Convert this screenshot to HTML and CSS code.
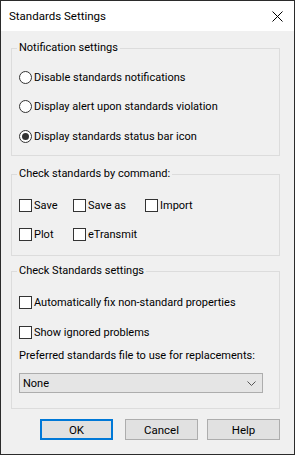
FILE: index.html
```html
<!DOCTYPE html>
<html lang="en">
<head>
    <meta charset="UTF-8">
    <meta name="viewport" content="width=device-width, initial-scale=1.0">
    <title>Standards Settings</title>
    <link rel="stylesheet" href="styles.css">
</head>
<body>
    <div class="window">
        <div class="titlebar">
            <span class="title">Standards Settings</span>
            <span class="close">
                <svg width="11" height="11" viewBox="0 0 11 11"><path d="M0.5 0.5 L10.5 10.5 M10.5 0.5 L0.5 10.5" stroke="#000" stroke-width="1" fill="none"/></svg>
            </span>
        </div>
        <div class="content">
            <fieldset class="group group-notify">
                <legend>Notification settings</legend>
                <label class="option"><span class="radio"></span>Disable standards notifications</label>
                <label class="option"><span class="radio"></span>Display alert upon standards violation</label>
                <label class="option"><span class="radio checked"></span>Display standards status bar icon</label>
            </fieldset>

            <fieldset class="group group-command">
                <legend>Check standards by command:</legend>
                <div class="command-grid">
                    <label class="option"><span class="check"></span>Save</label>
                    <label class="option"><span class="check"></span>Save as</label>
                    <label class="option"><span class="check"></span>Import</label>
                    <label class="option"><span class="check"></span>Plot</label>
                    <label class="option"><span class="check"></span>eTransmit</label>
                </div>
            </fieldset>

            <fieldset class="group group-settings">
                <legend>Check Standards settings</legend>
                <label class="option"><span class="check"></span>Automatically fix non-standard properties</label>
                <label class="option"><span class="check"></span>Show ignored problems</label>
                <div class="caption">Preferred standards file to use for replacements:</div>
                <div class="dropdown">
                    <span>None</span>
                    <svg width="9" height="5" viewBox="0 0 9 5"><path d="M0.5 0.5 L4.5 4.5 L8.5 0.5" stroke="#555" stroke-width="1" fill="none"/></svg>
                </div>
            </fieldset>

            <div class="buttons">
                <button class="btn btn-default">OK</button>
                <button class="btn btn-cancel">Cancel</button>
                <button class="btn">Help</button>
            </div>
        </div>
    </div>
</body>
</html>
```

FILE: styles.css
```css
/* General Styling */
body {
    margin: 0;
    font-family: Roboto, "Noto Sans", sans-serif;
    font-size: 11px;
    color: #000;
}
.window {
    width: 295px;
    height: 455px;
    box-sizing: border-box;
    border: 1px solid #2b2b2b;
    background: #f0f0f0;
    display: flex;
    flex-direction: column;
}
/* Title bar */
.titlebar {
    height: 30px;
    background: #fff;
    display: flex;
    align-items: center;
    justify-content: space-between;
    padding: 0 11px 0 8px;
}
.title {
    font-size: 11.5px;
}
.close {
    display: flex;
}
/* Group boxes */
.content {
    padding: 9px 14px 0 10px;
}
.group {
    margin: 0;
    border: 1px solid #dcdcdc;
    padding: 0 7px;
    display: flex;
    flex-direction: column;
    align-items: flex-start;
}
.group legend {
    padding: 0 2px;
    margin-left: -2px;
    line-height: 16px;
}
.group-notify {
    padding-top: 13px;
    padding-bottom: 11px;
    gap: 13.5px;
}
.group-command {
    margin-top: 10px;
    padding-top: 15px;
    padding-bottom: 13px;
}
.group-settings {
    margin-top: 7px;
    padding-top: 15px;
    padding-bottom: 15px;
    gap: 14px;
}
.option {
    display: flex;
    align-items: center;
    height: 16px;
    gap: 2px;
    white-space: nowrap;
}
.command-grid {
    display: grid;
    grid-template-columns: 54px 72px auto;
    row-gap: 13px;
}
/* Radios and checks */
.radio,
.check {
    width: 13px;
    height: 13px;
    box-sizing: border-box;
    border: 1px solid #333;
    background: #fff;
    flex-shrink: 0;
}
.radio {
    border-radius: 50%;
    display: flex;
    align-items: center;
    justify-content: center;
}
.radio.checked::after {
    content: "";
    width: 7px;
    height: 7px;
    border-radius: 50%;
    background: #333;
}
.caption {
    margin-top: -6px;
    line-height: 16px;
    white-space: nowrap;
}
/* Dropdown */
.dropdown {
    margin-top: -5px;
    width: 244px;
    height: 20px;
    box-sizing: border-box;
    border: 1px solid #adadad;
    background: #e5e5e5;
    display: flex;
    align-items: center;
    justify-content: space-between;
    padding: 0 6px 0 3px;
}
/* Buttons */
.buttons {
    margin-top: 10px;
    display: flex;
    justify-content: flex-end;
}
.btn {
    width: 73px;
    height: 21px;
    box-sizing: border-box;
    border: 1px solid #adadad;
    background: #e1e1e1;
    font-family: inherit;
    font-size: 11.5px;
    padding: 0;
    margin-left: 9px;
}
.btn-cancel {
    margin-left: 12px;
}
.btn-default {
    border: 2px solid #0078d7;
}
```
